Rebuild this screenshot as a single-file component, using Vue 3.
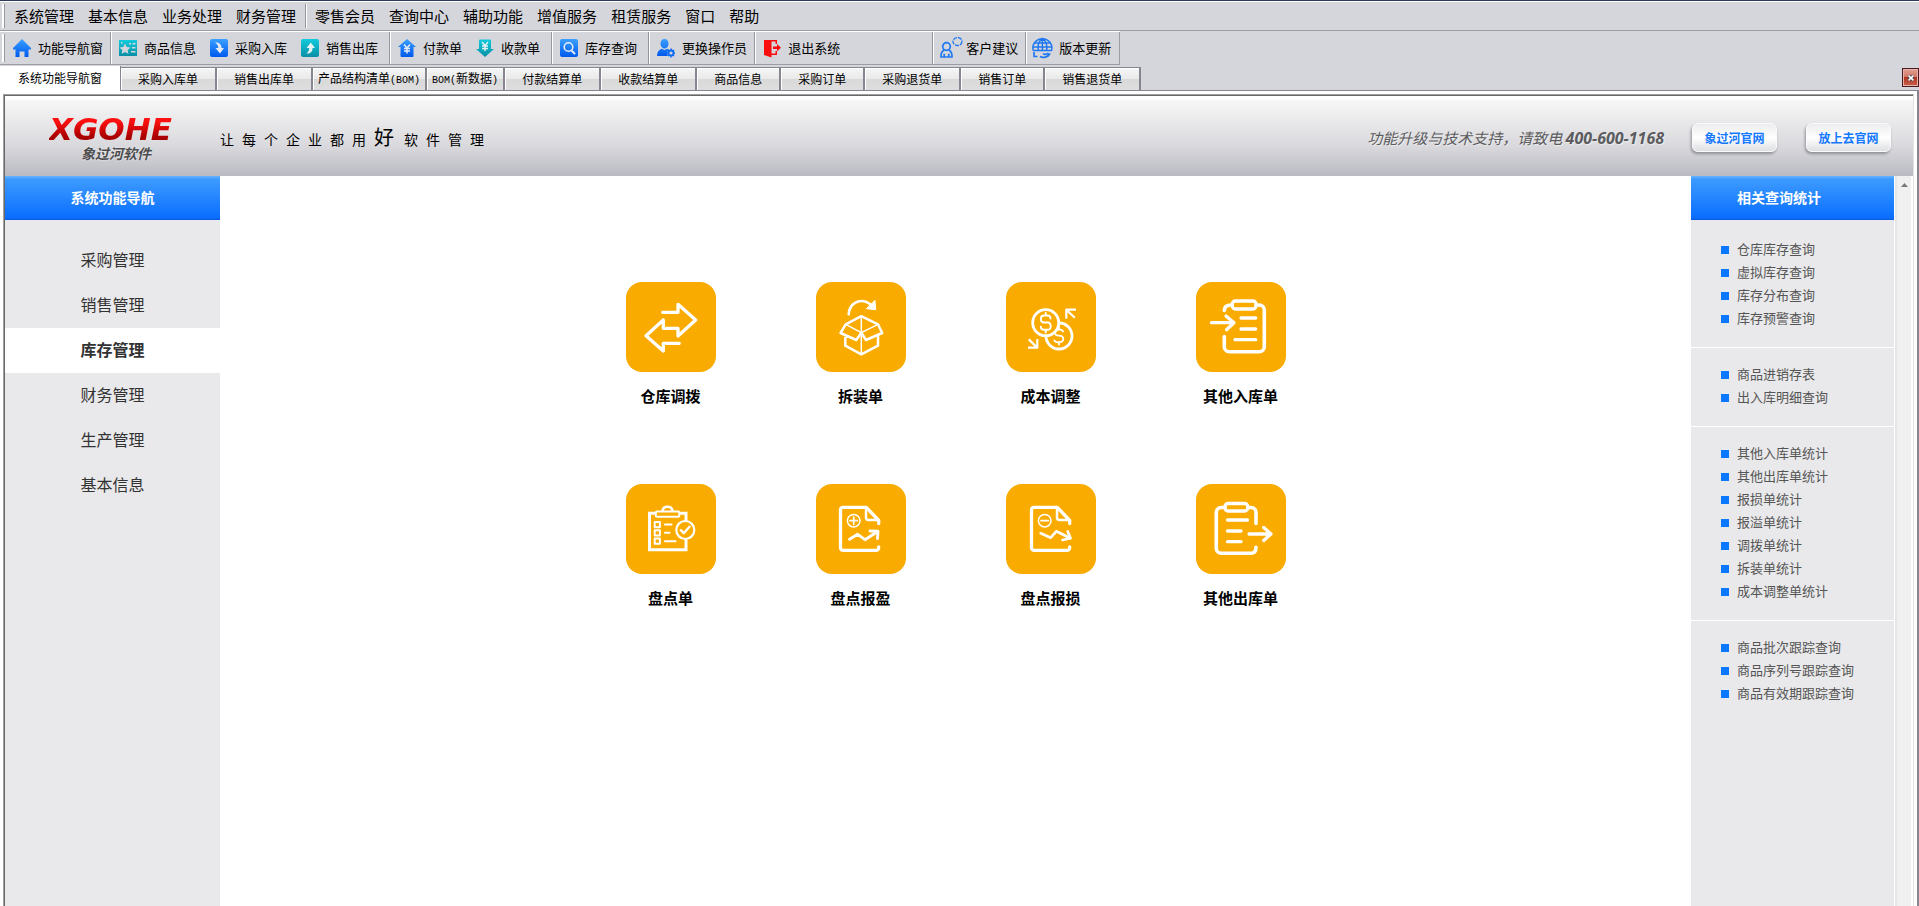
<script setup>
import { ref } from 'vue'

const menuLeft = ['系统管理', '基本信息', '业务处理', '财务管理']
const menuRight = ['零售会员', '查询中心', '辅助功能', '增值服务', '租赁服务', '窗口', '帮助']

const icons = {
  home: '<path fill="url(#blue)" d="M9 0 18 9v1.500h-2.500V18h-4v-5.500h-5V18h-4v-7.500H0V9z"/>',
  goods: '<path fill="url(#teal)" d="M0 1h18v16H0z"/><path fill="#d5d6db" d="m6 4.500 1.700 3.400 3.800.5-2.800 2.600.7 3.700L6 12.900l-3.400 1.800.7-3.700L.5 8.400l3.800-.5zM10 4h2v1.500h-2zM13.500 4h3v1.500h-3zM13 8h3.500v1.500H13zM12 12h4.500v1.500H12zM2 3h1.500v1.500H2z"/>',
  purchase: '<rect width="18" height="18" rx="2" fill="url(#blue)"/><path fill="#e6ebf5" d="M5 3.500c3.500-.5 6.500 1.500 6.600 5.500H14l-4 5.500L5.500 9h2.800c.1-2-.8-4-3.300-5.500z"/>',
  sale: '<rect width="18" height="18" rx="2" fill="url(#teal)"/><path fill="#e6f3f5" d="M5.500 14.500c3.500.3 6-1.500 6.100-5.500H14L9.800 3.500 5.500 9h2.700c.1 2-.7 4-2.700 5.500z"/>',
  pay: '<path fill="url(#blue)" d="M9 0l9 8h-2.500v9a1 1 0 0 1-1 1h-11a1 1 0 0 1-1-1V8H0z"/><path fill="none" stroke="#e3e9f4" stroke-width="1.500" d="m6 5.500 3 3.500 3-3.500M9 9v5.500M6 9.500h6M6 12h6"/>',
  receive: '<path fill="url(#teal)" d="M9 18 0 10h3V1.500A1 1 0 0 1 4 .5h10a1 1 0 0 1 1 1V10h3z"/><path fill="none" stroke="#e3f1f4" stroke-width="1.500" d="m6 3 3 3.500L12 3M9 6.500V12M6 7h6M6 9.500h6"/>',
  search: '<rect width="18" height="18" rx="2" fill="url(#blue)"/><circle cx="8.500" cy="8" r="4.300" fill="none" stroke="#e6ebf5" stroke-width="1.600"/><path stroke="#e6ebf5" stroke-width="2" stroke-linecap="round" d="m12 12 2.500 2.500"/>',
  operator: '<path fill="url(#blue)" d="M7.500 0C10 0 11.500 1.800 11.500 4.500S10 9.500 7.500 9.500 3.500 7 3.500 4.500 5 0 7.500 0zM0 17c0-4 2-6.500 4.500-7.300L7.500 11l3-1.300 1.500.8-2 3 .8 3.500z"/><circle cx="14" cy="14" r="2.500" fill="none" stroke="#0c6cf2" stroke-width="1.800"/><path stroke="#0c6cf2" stroke-width="1.500" d="M14 9.500V11M14 17v1.500M9.800 14h1.400M16.700 14h1.300M11 11l1 1M16 16l1 1M17 11l-1 1M11 17l1-1"/>',
  exit: '<path fill="#f90d0d" d="M1 1h13v4h-1.500V2.500H8.500v12h4V12H14v4H8.500v2.500L1 16z"/><path fill="#f90d0d" d="M10 7.500h4V5l4 3.700-4 3.600V10h-4z"/>',
  advice: '<g fill="none" stroke="#1f78f2" stroke-width="1.700"><circle cx="5.500" cy="7.500" r="3.800"/><path d="M3.200 10.800C.5 12.500-.2 15 0 18h3.200v-3.200M7.800 10.800c2.700 1.700 3.400 4.200 3.200 7.200H7.800v-3.200M3.200 18h4.600"/><ellipse cx="16.500" cy="2.500" rx="4.500" ry="4" stroke-width="1.300" stroke-dasharray="4 1"/></g>',
  version: '<g fill="none" stroke="#1f78f2" stroke-width="1.500"><path d="M-.8 11.500A9.500 9.500 0 1 1 17.600 11.500"/><path d="M4.500 11.500C3 7 5 1.500 8.400-.5 12 1.500 13.800 7 12.500 11.500M8.400-.5v12M.5 4h16M-1 8h19M-1 11.500h19"/><path stroke-width="1.700" d="M0 13v4.500h3.500M6 17.500c3 1.800 8 1 10-3M9 14.500c1.500 1.500 4 1.200 5.500-.5"/></g>'
}

const toolGroups = [
  { kind: 'tight', items: [['home', '功能导航窗']] },
  { kind: 'loose', items: [['goods', '商品信息'], ['purchase', '采购入库'], ['sale', '销售出库']] },
  { kind: 'loose', items: [['pay', '付款单'], ['receive', '收款单']] },
  { kind: 'loose', items: [['search', '库存查询']] },
  { kind: 'tight', items: [['operator', '更换操作员']] },
  { kind: 'wide', items: [['exit', '退出系统']] },
  { kind: 'tight', items: [['advice', '客户建议']] },
  { kind: 'tight', items: [['version', '版本更新']] }
]

const tabs = [
  { text: '采购入库单' }, { text: '销售出库单' },
  { text: '产品结构清单', after: '(BOM)', snug: true },
  { before: 'BOM(', text: '新数据', after: ')', snug: true },
  { text: '付款结算单' }, { text: '收款结算单' }, { text: '商品信息' }, { text: '采购订单' },
  { text: '采购退货单' }, { text: '销售订单' }, { text: '销售退货单' }
]

const nav = ['采购管理', '销售管理', '库存管理', '财务管理', '生产管理', '基本信息']
const active = ref('库存管理')

const docOutline = '<path d="M62.700 39.500v-3L50.300 23.300H27a2.500 2.500 0 0 0-2.500 2.500v38a2.500 2.500 0 0 0 2.500 2.500h33.500q2.200 0 2.200-3.500"/><path stroke-width="2.500" d="M50 24v9.500q0 2.500 2.500 2.500H62"/>'

const tiles = [
  { name: '仓库调拨', art: '<path d="M36.700 30.300H52v-8L69.700 38 52 54v-7.700H37.300V38L20 53.700 37.300 69v-7.700h16"/>' },
  { name: '拆装单', art: '<path stroke-width="2.600" d="M32.700 32.300C33.500 20 46 15 55 23"/><path fill="#fff" stroke-width="1" d="m59 18.700.7 9-9-1z"/><path stroke-width="2.500" d="M45.300 34.200 29.700 42.300 24.500 51l15.800 7 5-7.300 4.700 7.300 16.200-7L62 42.300zM29.300 53.500v10.200l16 8.600 16.700-8.600V53.500"/><path stroke-width="1.500" d="M45.300 34v38M29.700 42.300l15.600 8.400L62 42.300"/>' },
  { name: '成本调整', art: '<circle cx="53" cy="54" r="13" stroke-width="2.800"/><path stroke-width="1.800" d="M57 49.500q-.5-2-4-2t-4 3 4 3.200 4.300 3.300-4.300 3.300-4.500-2M53 45v2.500M53 60v2.500"/><circle cx="39.700" cy="40.700" r="13" fill="#f9ab00" stroke-width="2.800"/><path stroke-width="1.900" d="M44.500 36.500q0-3-3-3h-3.500q-3.200 0-3.200 3.500t3.200 3.500h3.500q3.200 0 3.200 3.700t-3.200 3.600H38q-3.200 0-3.200-3M39.700 31v2.500M39.700 48v2.500"/><path stroke-width="2.200" stroke-linecap="butt" d="M70 27.700h-9.700v9M60.300 27.700l8.500 8M22 65.700h9.300V57M31.300 65.700l-8.500-8.300"/>' },
  { name: '其他入库单', art: '<path stroke-width="3.600" d="M28.300 28.500q0-5.500 7-5.500M60 23h3.300a5 5 0 0 1 5 5v36.700a5 5 0 0 1-5 5h-30a5 5 0 0 1-5-5V54.500"/><rect x="36.300" y="19" width="23.700" height="8" rx="3"/><path stroke-width="3.300" d="M15.500 40.700H38M30 34l8 6.700-7.500 7M45 36h14.700M45 47h14.700M39 57.700h20.700"/>' },
  { name: '盘点单', art: '<path stroke-width="3" stroke-linejoin="miter" d="M29 29.300h-5.500v36.500h36.500V56M54 29.300h6V36"/><rect x="29.800" y="27.500" width="23.500" height="5.300" stroke-width="2" rx="1"/><path stroke-width="2.400" d="M36.500 26.500c1-5 9-5 10 0"/><path stroke-width="2" d="M28.700 38h5.200v5.200h-5.200zM28.700 46.300h5.200v5.200h-5.200zM28.700 54.600h5.200v5.200h-5.200zM39 40.500h6.500M39 48.700h4.500M39 57.200h10.500"/><circle cx="59.300" cy="46" r="9" fill="#f9ab00" stroke-width="2.200"/><path stroke-width="2.400" d="m54.800 46.200 3 3 5.700-6.500"/>' },
  { name: '盘点报盈', art: docOutline + '<circle cx="37.700" cy="36.700" r="6.300" stroke-width="1.500"/><path stroke-width="1.700" d="M34 36.700h7.400M37.700 33v7.400"/><path stroke-width="2.900" d="m33.500 55.300 8.200-5 7.300 5.400 12.700-8.200M54 47l8 .3-.5 7.200"/>' },
  { name: '盘点报损', art: '<g transform="translate(1 0)">' + docOutline + '</g><circle cx="38.700" cy="36.700" r="6.300" stroke-width="1.500"/><path stroke-width="1.700" d="M35 36.700h7.400"/><path stroke-width="2.700" d="m34.700 49.300 10 4.400 5.600-6.400 14 7M61.700 47.500l2.800 6.800-8 1.700"/>' },
  { name: '其他出库单', art: '<path stroke-width="3.600" d="M29 23.500h-3.700a5 5 0 0 0-5 5v35.800a5 5 0 0 0 5 5H55q5 0 5-6M51.700 23.500H55a5 5 0 0 1 5 5V39.500"/><rect x="29" y="19.500" width="22.700" height="7.500" rx="3"/><path stroke-width="3.300" d="M53 50h22M67.700 43.500l7.300 6.500-7.300 6.500M31.500 36h20M31.500 47H45M31.500 57.700H45"/>' }
]

const queries = [
  ['仓库库存查询', '虚拟库存查询', '库存分布查询', '库存预警查询'],
  ['商品进销存表', '出入库明细查询'],
  ['其他入库单统计', '其他出库单统计', '报损单统计', '报溢单统计', '调拨单统计', '拆装单统计', '成本调整单统计'],
  ['商品批次跟踪查询', '商品序列号跟踪查询', '商品有效期跟踪查询']
]
</script>

<template>
  <div class="window">
    <svg class="defs" aria-hidden="true">
      <linearGradient id="blue" x1="0" y1="0" x2="0" y2="1">
        <stop offset="0" stop-color="#3aa0ff" /><stop offset="1" stop-color="#0059ee" />
      </linearGradient>
      <linearGradient id="teal" x1="0" y1="0" x2="0" y2="1">
        <stop offset="0" stop-color="#10cbdc" /><stop offset="1" stop-color="#0a8fa5" />
      </linearGradient>
    </svg>

    <nav class="menubar">
      <span class="grip"></span>
      <div class="menus">
        <button v-for="m in menuLeft" :key="m" type="button">{{ m }}</button>
      </div>
      <div class="menus">
        <button v-for="m in menuRight" :key="m" type="button">{{ m }}</button>
      </div>
    </nav>

    <div class="toolbar">
      <span class="grip"></span>
      <div v-for="(g, i) in toolGroups" :key="i" class="group" :class="g.kind">
        <button v-for="[icon, label] in g.items" :key="label" type="button">
          <svg viewBox="0 0 18 18" v-html="icons[icon]"></svg>
          <span>{{ label }}</span>
        </button>
      </div>
    </div>

    <div class="tabbar">
      <button type="button" class="tab current">系统功能导航窗</button>
      <button v-for="t in tabs" :key="t.text" type="button" class="tab" :class="{ snug: t.snug }">
        <span v-if="t.before" class="latin">{{ t.before }}</span>{{ t.text }}<span v-if="t.after" class="latin">{{ t.after }}</span>
      </button>
      <button type="button" class="close" aria-label="关闭">
        <svg viewBox="0 0 10 10"><path d="M2 2l6 6M8 2 2 8" stroke="#44454f" stroke-width="4" /><path d="M2 2l6 6M8 2 2 8" stroke="#fff" stroke-width="2" /></svg>
      </button>
    </div>

    <div class="frame">
      <div class="page">
        <header class="banner">
          <div class="brand">
            <span class="logo">XGOHE</span>
            <span class="company">象过河软件</span>
          </div>
          <p class="slogan">
            <span v-for="c in '让每个企业都用好软件管理'" :key="c" :class="{ big: c === '好' }">{{ c }}</span>
          </p>
          <p class="hotline">功能升级与技术支持，请致电 <b>400-600-1168</b></p>
          <div class="sites">
            <a href="#">象过河官网</a>
            <a href="#">放上去官网</a>
          </div>
        </header>

        <div class="body">
          <nav class="side">
            <h2>系统功能导航</h2>
            <button v-for="n in nav" :key="n" type="button" :class="{ on: n === active }" @click="active = n">{{ n }}</button>
          </nav>

          <main class="work">
            <div class="tiles">
              <a v-for="t in tiles" :key="t.name" href="#" class="tile">
                <svg viewBox="0 0 90 90" v-html="t.art"></svg>
                <span>{{ t.name }}</span>
              </a>
            </div>
          </main>

          <aside class="related">
            <h2>相关查询统计</h2>
            <div class="lists">
              <ul v-for="(q, i) in queries" :key="i">
                <li v-for="name in q" :key="name"><a href="#">{{ name }}</a></li>
              </ul>
            </div>
          </aside>
          <div class="scroll"><span></span></div>
        </div>
      </div>
    </div>
  </div>
</template>

<style>
body { margin: 0; background: #d5d6db; }
</style>

<style scoped>
* { box-sizing: border-box; }
.window {
  display: flex;
  flex-direction: column;
  min-height: 100vh;
  background: #d5d6db;
  color: #000;
  font-family: "Noto Sans CJK SC", sans-serif;
}
.defs { position: absolute; width: 0; height: 0; }
button {
  padding: 0;
  border: 0;
  background: none;
  color: inherit;
  font: inherit;
  white-space: nowrap;
}
a { color: inherit; text-decoration: none; }
h2, p, ul { margin: 0; padding: 0; }

.menubar {
  display: flex;
  align-items: center;
  height: 31px;
  border-top: 1px solid #2b3a58;
  border-bottom: 1px solid #9c9da2;
  box-shadow: inset 0 1px #fff;
  font-size: 15px;
  line-height: 24px;
}
.grip {
  width: 3px;
  height: 24px;
  margin-left: 2px;
  border-left: 2px solid #fff;
  border-right: 1px solid #97989e;
}
.menus { display: flex; gap: 14px; padding: 0 9px; }
.menus + .menus {
  border-left: 1px solid #97989e;
  box-shadow: inset 1px 0 #fff;
}

.toolbar {
  display: flex;
  align-items: center;
  align-self: flex-start;
  height: 34px;
  border-top: 1px solid #fff;
  border-bottom: 1px solid #9c9da2;
  font-size: 13px;
}
.toolbar .grip { height: 28px; margin-right: 1px; }
.group {
  display: flex;
  align-items: center;
  gap: 14px;
  height: 32px;
  padding-left: 7px;
  border-right: 1px solid #fff;
  box-shadow: inset -1px 0 #97989e;
}
.tight { padding-right: 8px; }
.loose { padding-right: 12px; }
.wide { padding-right: 93px; }
.group:last-child { border-right-color: #9c9da2; box-shadow: none; }
.group button { display: flex; align-items: center; gap: 7px; line-height: 20px; }
.group svg { width: 18px; height: 18px; overflow: visible; }

.tabbar {
  display: flex;
  align-items: flex-end;
  height: 26px;
  border-bottom: 1px solid #85868f;
  font-size: 12px;
  line-height: 16px;
}
.tab {
  height: 23px;
  padding: 0 17px;
  border: 1px solid #85868f;
  border-width: 1px 2px 0 0;
  background: linear-gradient(#f6f6f7, #e9e9ea 50%, #d9d9da 52%, #dedede);
  box-shadow: inset 1px 1px #fff;
}
.snug { padding: 0 5px; }
.tab.current {
  height: 25px;
  margin-bottom: -1px;
  padding: 0 18px 2px;
  background: #fff;
  border-width: 0 1px 0 0;
}
.latin { font-family: "Liberation Mono", monospace; font-size: 10px; }
.close {
  display: flex;
  align-items: center;
  justify-content: center;
  align-self: center;
  width: 17px;
  height: 19px;
  margin-left: auto;
  border: 1px solid #4b1a20;
  background: linear-gradient(#e2a194, #d3796a 45%, #b03421 50%, #c9614f);
  box-shadow: inset 0 0 0 1px #e7b3a8;
}
.close svg { width: 8px; height: 8px; }

.frame {
  display: flex;
  flex: 1;
  padding: 3px 3px 0 3px;
  background: #fff;
  border-right: 2px solid #85868f;
}
.page {
  display: flex;
  flex: 1;
  flex-direction: column;
  border: 1px solid #a0a0a0;
  border-width: 1px 1px 0 1px;
  border-right-color: #e3e3e3;
  box-shadow: inset 1px 1px #696969;
  padding: 1px 0 0 1px;
}
.banner {
  display: flex;
  align-items: center;
  height: 80px;
  padding: 0 22px 0 44px;
  background: linear-gradient(#fff 3px, #f7f7f7 4px, #d9d9dd 50px, #b9bac2);
}
.brand { display: flex; flex-direction: column; width: 171px; padding-top: 8px; }
.logo {
  width: 140px;
  background: linear-gradient(#ff1010 20%, #a90000 80%);
  background-clip: text;
  color: transparent;
  font: italic bold 31px/26px "DejaVu Sans", sans-serif;
}
.company {
  padding-left: 32px;
  color: #4c4c4e;
  font-size: 14px;
  font-style: italic;
  font-weight: 700;
  line-height: 22px;
  text-shadow: 0 0 2px #fff;
}
.slogan {
  display: flex;
  align-items: baseline;
  gap: 8px;
  padding-top: 4px;
  font-size: 14px;
  line-height: 30px;
}
.slogan .big { padding-right: 2px; font-size: 20px; }
.hotline {
  margin-left: auto;
  padding-top: 4px;
  color: #5c5c60;
  font-size: 15px;
  font-style: italic;
  line-height: 24px;
  text-shadow: 1px 1px 1px #eee;
}
.hotline b { font-family: "Open Sans", sans-serif; font-size: 16px; }
.sites { display: flex; gap: 29px; margin-left: 28px; padding-top: 2px; }
.sites a {
  width: 85px;
  border: 1px solid #fafafa;
  border-radius: 6px;
  background: linear-gradient(#ececee, #fff 50%, #dedfe2);
  box-shadow: -1px 2px 3px #8e8f96;
  color: #1478ff;
  font-size: 12px;
  font-weight: 700;
  line-height: 27px;
  text-align: center;
}

.body { display: flex; flex: 1; }
h2 {
  height: 44px;
  background: linear-gradient(#6ab4ff, #3d9bff 3px, #0a6eff 42px, #0a58d8);
  color: #fff;
  font-size: 14px;
  font-weight: 700;
  line-height: 42px;
}
.side {
  display: flex;
  flex-direction: column;
  width: 215px;
  background: #e9e9eb;
  color: #333;
  font-size: 16px;
}
.side h2 { margin-bottom: 18px; text-align: center; }
.side button { height: 45px; padding-bottom: 4px; line-height: 40px; }
.side .on { background: #fff; font-weight: 700; }

.work { flex: 1; padding-top: 106px; }
.tiles {
  display: grid;
  grid-template-columns: repeat(4, 90px);
  justify-content: center;
  gap: 64px 100px;
}
.tile { display: flex; flex-direction: column; align-items: center; gap: 12px; }
.tile svg {
  width: 90px;
  height: 90px;
  border-radius: 16px;
  background: #f9ab00;
  fill: none;
  stroke: #fff;
  stroke-width: 3.3px;
  stroke-linecap: round;
  stroke-linejoin: round;
}
.tile span { font-size: 15px; font-weight: 700; line-height: 24px; white-space: nowrap; height: 36px; }

.related { width: 203px; background: #e9e9eb; }
.related h2 { padding-left: 46px; }
.lists { padding-top: 3px; }
.lists ul { padding: 15px 0 17px 30px; list-style: none; }
.lists ul + ul { border-top: 1px solid #fff; }
.lists li {
  display: flex;
  align-items: center;
  gap: 8px;
  height: 23px;
  color: #555;
  font-size: 13px;
  line-height: 21px;
}
.lists li a { padding-bottom: 2px; }
.lists li::before { width: 8px; height: 8px; background: #0a78ff; content: ""; }
.scroll {
  width: 16px;
  margin: 0 2px 0 1px;
  padding-top: 7px;
  background: #f0f0f0;
  border-left: 2px solid #e6e6e6;
}
.scroll span {
  display: block;
  width: 7px;
  height: 4px;
  margin-left: 4px;
  background: #77787c;
  clip-path: polygon(50% 0, 100% 100%, 0 100%);
}
</style>
